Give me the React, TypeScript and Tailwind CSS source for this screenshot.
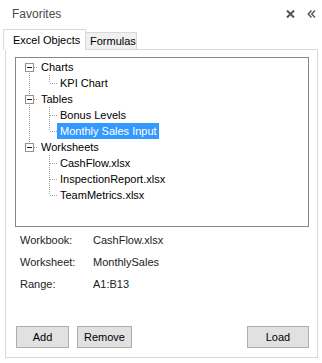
import React from "react";

type Node = {
  label: string;
  children?: string[];
};

const tree: Node[] = [
  { label: "Charts", children: ["KPI Chart"] },
  { label: "Tables", children: ["Bonus Levels", "Monthly Sales Input"] },
  { label: "Worksheets", children: ["CashFlow.xlsx", "InspectionReport.xlsx", "TeamMetrics.xlsx"] },
];

const DOT = "#a0a0a0";

// one 16px-high slice of the connector lines
const Guide = ({
  width,
  vertical,
  horizontal,
  box,
}: {
  width: number;
  vertical: "none" | "full" | "top" | "bottom";
  horizontal?: boolean;
  box?: boolean;
}) => {
  const y1 = vertical === "bottom" ? 8 : 0;
  const y2 = vertical === "top" ? 8 : 16;
  return (
    <svg width={width} height={16} className="shrink-0 block">
      {vertical !== "none" && (
        <line x1={10.5} x2={10.5} y1={y1} y2={y2} stroke={DOT} strokeDasharray="1 1" />
      )}
      {horizontal && (
        <line x1={11} x2={width} y1={8.5} y2={8.5} stroke={DOT} strokeDasharray="1 1" />
      )}
      {box && (
        <>
          <rect x={6.5} y={4.5} width={8} height={8} fill="#fff" stroke="#919191" />
          <line x1={8} x2={13} y1={8.5} y2={8.5} stroke="#1e1e1e" />
        </>
      )}
    </svg>
  );
};

const TreeRow = ({ children, selected }: { children: React.ReactNode; selected?: boolean }) => (
  <span
    className={
      selected
        ? "h-4 pl-[3px] pr-[2px] leading-4 bg-[#3399ff] text-white whitespace-nowrap"
        : "h-4 pl-[3px] pr-[2px] leading-4 text-black whitespace-nowrap"
    }
  >
    {children}
  </span>
);

const FavoritesTree = () => (
  <div className="mt-[7px] ml-[9px] w-[294px] h-[170px] border border-[#828790] bg-white pt-px pl-[3px] overflow-hidden">
    {tree.map((node, i) => {
      const lastRoot = i === tree.length - 1;
      return (
        <div key={node.label}>
          <div className="flex h-4 items-center">
            <Guide width={19} vertical={i === 0 ? "bottom" : lastRoot ? "top" : "full"} horizontal box />
            <TreeRow>{node.label}</TreeRow>
          </div>
          {node.children?.map((child, j) => {
            const lastChild = j === node.children!.length - 1;
            return (
              <div key={child} className="flex h-4 items-center">
                <Guide width={20} vertical={lastRoot ? "none" : "full"} />
                <Guide width={18} vertical={lastChild ? "top" : "full"} horizontal />
                <TreeRow selected={child === "Monthly Sales Input"}>{child}</TreeRow>
              </div>
            );
          })}
        </div>
      );
    })}
  </div>
);

const info = [
  ["Workbook:", "CashFlow.xlsx"],
  ["Worksheet:", "MonthlySales"],
  ["Range:", "A1:B13"],
];

const Button = ({ label, w }: { label: string; w: string }) => (
  <button className={`${w} h-[22px] bg-[#e1e1e1] border border-[#adadad] text-black text-[11px] leading-none`}>
    {label}
  </button>
);

export default function App() {
  return (
    <div
      className="w-[322px] h-[363px] bg-white flex flex-col text-[11px] text-black overflow-hidden"
      style={{ fontFamily: '"Liberation Sans", Arial, sans-serif' }}
    >
      {/* header */}
      <div className="h-[29px] flex items-center pl-[12px] pr-[6px] pb-[1px]">
        <span className="text-[12px] text-[#4a4a4a]">Favorites</span>
        <div className="ml-auto flex items-center gap-[12px]">
          <svg width={9} height={8} viewBox="0 0 9 8">
            <path d="M1 0.5 L8 7.5 M8 0.5 L1 7.5" stroke="#555" strokeWidth={2} />
          </svg>
          <svg width={9} height={8} viewBox="0 0 9 8">
            <path d="M4.5 0.5 L1.2 4 L4.5 7.5 M8 0.5 L4.7 4 L8 7.5" stroke="#555" strokeWidth={1.4} fill="none" />
          </svg>
        </div>
      </div>

      {/* tabs */}
      <div className="h-[20px] flex items-end pl-[3px]">
        <div className="relative z-10 w-[83px] h-[21px] -mb-px bg-white border border-b-0 border-[#d9d9d9] pl-[9px] pt-[2px] leading-[16px]">
          Excel Objects
        </div>
        <div className="w-[51px] h-[17px] bg-[#f0f0f0] border border-b-0 border-l-0 border-[#d9d9d9] pl-[4px] leading-[16px]">
          Formulas
        </div>
      </div>

      {/* tab page */}
      <div className="ml-[5px] w-[313px] h-[309px] border border-[#d9d9d9] bg-white flex flex-col">
        <FavoritesTree />

        <div className="mt-[2px] pl-[14px] text-[#222]">
          {info.map(([k, v]) => (
            <div key={k} className="h-[22px] flex items-center">
              <span className="w-[73px]">{k}</span>
              <span>{v}</span>
            </div>
          ))}
        </div>

        <div className="mt-auto mb-[9px] ml-[10px] mr-[8px] flex items-center">
          <Button label="Add" w="w-[53px]" />
          <div className="w-[8px]" />
          <Button label="Remove" w="w-[55px]" />
          <div className="ml-auto">
            <Button label="Load" w="w-[62px]" />
          </div>
        </div>
      </div>
    </div>
  );
}
